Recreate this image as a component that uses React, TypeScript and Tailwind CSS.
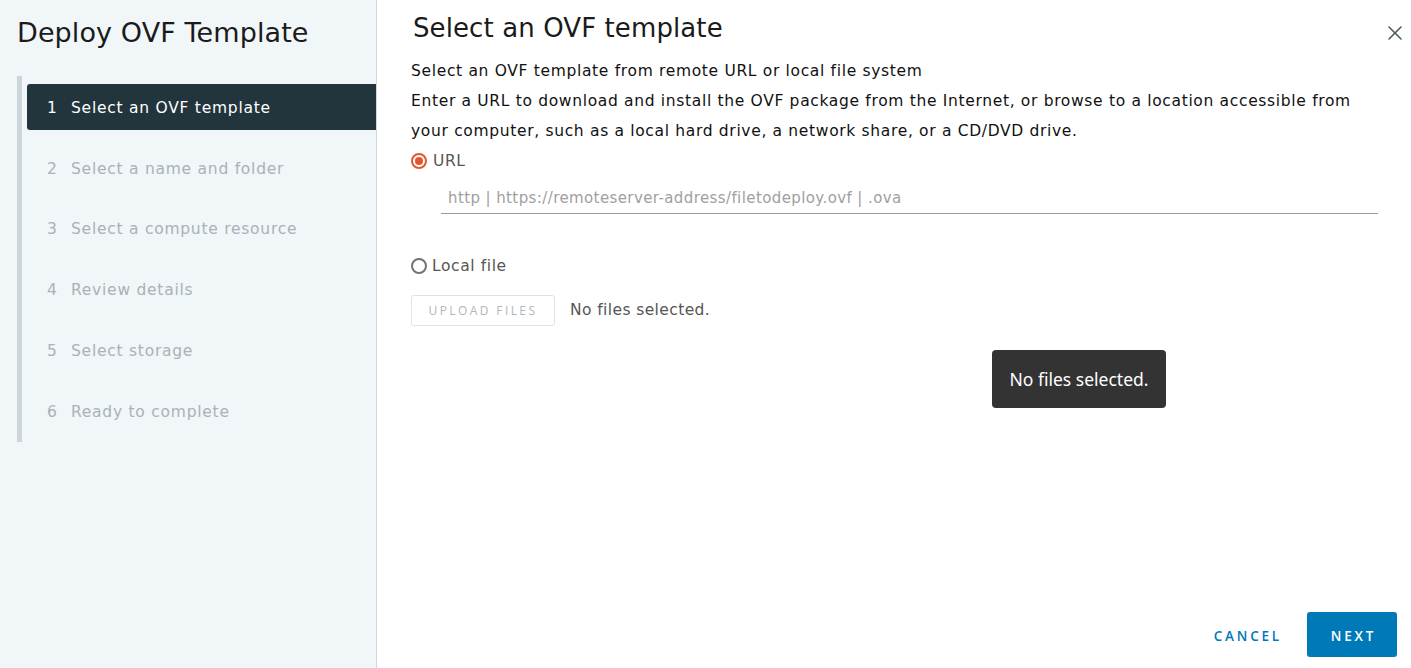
import { X } from 'lucide-react';

const steps = [
  'Select an OVF template',
  'Select a name and folder',
  'Select a compute resource',
  'Review details',
  'Select storage',
  'Ready to complete',
];

const font = { fontFamily: '"DejaVu Sans", "Liberation Sans", sans-serif' };
const btnFont = { fontFamily: '"Open Sans", "Liberation Sans", sans-serif' };

const App = () => {
  return (
    <div className="flex h-[668px] w-[1411px] bg-white text-[#1b1b1b]" style={font}>
      {/* Wizard steps */}
      <aside className="flex w-[377px] shrink-0 flex-col border-r border-[#cfd8dc] bg-[#f1f6f9]">
        <h1 className="pl-[17px] pt-[13px] text-[27px] leading-[40px] font-normal tracking-[0.1px] text-[#1b1b1b]">
          Deploy OVF Template
        </h1>
        <div className="ml-[17px] mt-[23px] flex h-[366px] flex-col border-l-[5px] border-[#ccd5da] pt-[8px]">
          {steps.map((s, i) => (
            <div
              key={s}
              className={
                i === 0
                  ? 'ml-[5px] flex h-[46px] items-center rounded-l-[3px] bg-[#22343c] pl-[20px] pt-[3px] text-[15.5px] tracking-[0.75px] text-white'
                  : 'ml-[5px] mt-[14.8px] flex h-[46px] items-center pl-[20px] pt-[3px] text-[15.5px] tracking-[0.75px] text-[#a9b2b6]'
              }
            >
              <span className="w-[24px]">{i + 1}</span>
              <span>{s}</span>
            </div>
          ))}
        </div>
      </aside>

      {/* Main panel */}
      <main className="relative flex flex-1 flex-col pl-[34px] pr-[14px]">
        <div className="flex items-start justify-between">
          <h2 className="pl-[2px] pt-[8px] text-[26px] leading-[40px] font-normal tracking-[0.1px] text-[#1b1b1b]">
            Select an OVF template
          </h2>
          <button className="mr-[-10px] mt-[21px] text-[#4d5b63]">
            <X size={24} strokeWidth={1.6} />
          </button>
        </div>

        <div className="mt-[8px] text-[15.5px] leading-[30px] tracking-[0.67px] text-[#111]">
          <p>Select an OVF template from remote URL or local file system</p>
          <p>
            Enter a URL to download and install the OVF package from the Internet, or browse to a location accessible from
            <br />
            your computer, such as a local hard drive, a network share, or a CD/DVD drive.
          </p>
        </div>

        <label className="flex h-[30px] items-center gap-[6px] text-[15.5px] tracking-[0.6px] text-[#565656]">
          <span className="flex h-[16px] w-[16px] items-center justify-center rounded-full border-2 border-[#e4572e]">
            <span className="h-[8px] w-[8px] rounded-full bg-[#e4572e]" />
          </span>
          <span className="pt-[2px]">URL</span>
        </label>

        <div className="ml-[30px] mr-[19px] mt-[9px] border-b border-[#9a9a9a] pb-[3px] pl-[7px] pt-[2px] text-[15px] tracking-[0.4px] text-[#a0a0a0]">
          http | https://remoteserver-address/filetodeploy.ovf | .ova
        </div>

        <label className="mt-[37px] flex h-[30px] items-center gap-[5px] text-[15.5px] tracking-[0.6px] text-[#565656]">
          <span className="h-[16px] w-[16px] rounded-full border-2 border-[#70737a]" />
          <span className="pt-[2px]">Local file</span>
        </label>

        <div className="mt-[14px] flex items-center gap-[15px]">
          <button
            className="h-[31px] w-[144px] rounded-[3px] border border-[#dde3e6] pt-[1px] text-[12px] font-medium tracking-[2.4px] text-[#b0b7bb]"
            style={btnFont}
          >
            UPLOAD FILES
          </button>
          <span className="pt-[1px] text-[15.5px] tracking-[0.4px] text-[#565656]">No files selected.</span>
        </div>

        {/* Tooltip */}
        <div
          className="absolute left-[615px] top-[350px] flex h-[58px] w-[174px] items-center justify-center rounded-[4px] bg-[#333333] text-[17.5px] text-white"
          style={{ fontFamily: '"Noto Sans", "Open Sans", sans-serif' }}
        >
          No files selected.
        </div>

        <div className="mt-auto mb-[11px] flex items-center justify-end gap-[25px]" style={btnFont}>
          <button className="pt-[3px] text-[13.5px] font-semibold tracking-[2.8px] text-[#0079b8]">CANCEL</button>
          <button className="h-[45px] w-[90px] rounded-[3px] bg-[#0079b8] pl-[3px] pt-[3px] text-[13.5px] font-semibold tracking-[2.8px] text-white">
            NEXT
          </button>
        </div>
      </main>
    </div>
  );
};

export default App;
